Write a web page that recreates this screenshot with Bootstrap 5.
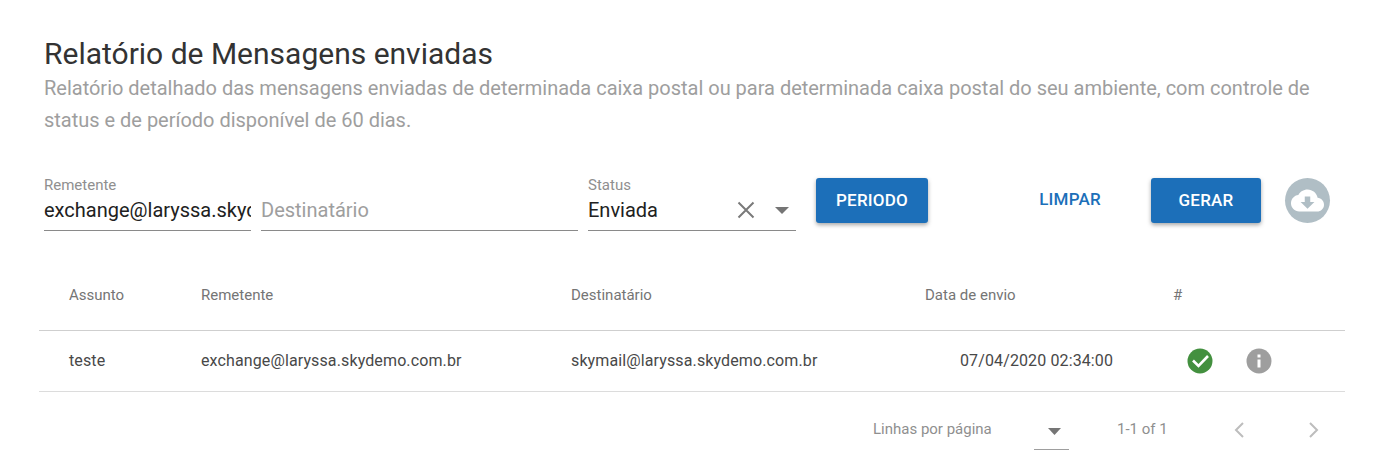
<!DOCTYPE html>
<html lang="en">

<head>
    <meta charset="UTF-8">
    <meta name="viewport" content="width=device-width, initial-scale=1.0">
    <title>Relatório de Mensagens enviadas</title>
    <link href="https://cdn.jsdelivr.net/npm/bootstrap@5.3.0/dist/css/bootstrap.min.css" rel="stylesheet">
    <style>
        body { font-family: Roboto, "Liberation Sans", sans-serif; background: #fff; color: #212121; overflow: hidden; }
        .report-page { padding: 36px 50px 0 39px; width: 1395px; }
        .report-head { padding-left: 5px; }
        .report-title { font-size: 30px; font-weight: 400; line-height: 36px; margin: 0; color: #333; }
        .report-sub { font-size: 20px; line-height: 32px; color: #9e9e9e; margin: 0; width: 1280px; letter-spacing: -.01px; }
        .filters { padding-left: 5px; margin-top: 42px; height: 67px; }
        .field { height: 53px; border-bottom: 1px solid #8a8a8a; flex: none; }
        .field-label { font-size: 15px; line-height: 17px; color: #8f8f8f; height: 18px; margin-top: -1px; }
        .field-value { font-size: 20px; line-height: 30px; color: #212121; white-space: nowrap; overflow: hidden; }
        .field-empty { color: #9e9e9e; padding-top: 17px; }
        .w-from { width: 207px; }
        .w-to { width: 317px; margin-left: 10px; }
        .w-status { width: 208px; margin-left: 10px; }
        .clear-icon { margin-right: 20px; }
        .drop-icon { margin-right: 7px; }
        .btn-report { background: #1c6fb9; color: #fff; font-size: 17px; font-weight: 500; letter-spacing: .2px; height: 45px; border: 0; border-radius: 3px; padding: 0; box-shadow: 0 2px 4px rgba(0,0,0,.35); flex: none; }
        .btn-report:hover { background: #1c6fb9; color: #fff; }
        .btn-periodo { width: 112px; margin-left: 20px; }
        .btn-gerar { width: 110px; margin-left: 26px; }
        .btn-limpar { width: 110px; margin-left: 87px; height: 45px; line-height: 43px; text-align: center; color: #1c6fb9; font-size: 17px; font-weight: 500; letter-spacing: .2px; }
        .cloud-btn { width: 45px; height: 45px; border-radius: 50%; background: #b0bec5; margin-left: 24px; flex: none; }
        .report-table { width: 1306px; margin: 14px 0 0; table-layout: fixed; }
        .col-subject { width: 162px; }
        .col-from { width: 370px; }
        .col-to { width: 354px; }
        .col-date { width: 248px; }
        .col-status { width: 59px; }
        .col-info { width: 113px; }
        .report-table th { font-size: 15px; font-weight: 400; color: #757575; height: 71px; border-bottom: 1px solid #cfcfcf; padding: 2px 0 0; vertical-align: middle; }
        .report-table td { font-size: 16px; color: #484848; letter-spacing: .12px; height: 61px; border-bottom: 1px solid #dcdcdc; padding: 0; vertical-align: middle; }
        .cell-first { padding-left: 30px !important; }
        .cell-date { padding-left: 35px !important; }
        .row-icon { display: block; margin-left: 14px; }
        .pager { height: 74px; width: 1306px; font-size: 15px; color: #8f8f8f; padding-top: 2px; }
        .pager-label { margin-left: 834px; width: 161px; }
        .pager-select { width: 35px; height: 37px; border-bottom: 1px solid #9e9e9e; flex: none; margin-top: 4px; }
        .pager-arrow { margin-left: 6px; }
        .pager-count { margin-left: 48px; width: 116px; }
        .pager-next { margin-left: 63px; }
    </style>
</head>

<body>
    <div class="report-page">
        <div class="report-head">
            <h1 class="report-title">Relatório de Mensagens enviadas</h1>
            <p class="report-sub">Relatório detalhado das mensagens enviadas de determinada caixa postal ou para determinada caixa postal do seu ambiente, com controle de status e de período disponível de 60 dias.</p>
        </div>

        <!-- filtros -->
        <div class="filters d-flex align-items-start">
            <div class="field w-from">
                <div class="field-label">Remetente</div>
                <div class="field-value">exchange@laryssa.skydemo.com.br</div>
            </div>
            <div class="field w-to">
                <div class="field-value field-empty">Destinatário</div>
            </div>
            <div class="field w-status">
                <div class="field-label">Status</div>
                <div class="d-flex align-items-center">
                    <div class="field-value flex-grow-1">Enviada</div>
                    <svg width="18" height="18" viewBox="0 0 18 18" class="clear-icon"><path d="M1.500 1.500l15 15M16.500 1.500l-15 15" stroke="#7a7a7a" stroke-width="2" fill="none"/></svg>
                    <svg width="14" height="7" viewBox="0 0 14 7" class="drop-icon"><path d="M0 0h14L7 7z" fill="#757575"/></svg>
                </div>
            </div>
            <button type="button" class="btn btn-report btn-periodo">PERIODO</button>
            <div class="btn-limpar">LIMPAR</div>
            <button type="button" class="btn btn-report btn-gerar">GERAR</button>
            <div class="cloud-btn d-flex align-items-center justify-content-center">
                <svg width="33" height="33" viewBox="0 0 24 24"><path d="M19.350 10.040C18.670 6.590 15.640 4 12 4 9.110 4 6.600 5.640 5.350 8.040 2.340 8.360 0 10.910 0 14c0 3.310 2.690 6 6 6h13c2.760 0 5-2.240 5-5 0-2.640-2.050-4.780-4.650-4.960zM17 13l-5 5-5-5h3V9h4v4h3z" fill="#fff"/></svg>
            </div>
        </div>

        <!-- tabela de mensagens -->
        <table class="report-table">
            <colgroup>
                <col class="col-subject">
                <col class="col-from">
                <col class="col-to">
                <col class="col-date">
                <col class="col-status">
                <col class="col-info">
            </colgroup>
            <thead>
                <tr>
                    <th class="cell-first">Assunto</th>
                    <th>Remetente</th>
                    <th>Destinatário</th>
                    <th>Data de envio</th>
                    <th>#</th>
                    <th></th>
                </tr>
            </thead>
            <tbody>
                <tr>
                    <td class="cell-first">teste</td>
                    <td>exchange@laryssa.skydemo.com.br</td>
                    <td>skymail@laryssa.skydemo.com.br</td>
                    <td class="cell-date">07/04/2020 02:34:00</td>
                    <td>
                        <svg width="26" height="26" viewBox="0 0 26 26" class="row-icon"><circle cx="13" cy="13" r="12.500" fill="#43903f"/><path d="M6 12.500l5.500 5.500 9.500-10" stroke="#fff" stroke-width="2.600" fill="none"/></svg>
                    </td>
                    <td>
                        <svg width="26" height="26" viewBox="0 0 26 26" class="row-icon"><circle cx="13" cy="13" r="12.500" fill="#9e9e9e"/><rect x="11.500" y="11.500" width="3" height="8" fill="#fff"/><rect x="11.500" y="6.500" width="3" height="3" fill="#fff"/></svg>
                    </td>
                </tr>
            </tbody>
        </table>

        <div class="pager d-flex align-items-center">
            <div class="pager-label">Linhas por página</div>
            <div class="pager-select d-flex align-items-center justify-content-center">
                <svg width="13" height="7" viewBox="0 0 13 7" class="pager-arrow"><path d="M0 0h13L6.500 7z" fill="#757575"/></svg>
            </div>
            <div class="pager-count">1-1 of 1</div>
            <svg width="12" height="18" viewBox="0 0 12 18"><path d="M10 2L3 9l7 7" stroke="#bdbdbd" stroke-width="2" fill="none"/></svg>
            <svg width="12" height="18" viewBox="0 0 12 18" class="pager-next"><path d="M2 2l7 7-7 7" stroke="#bdbdbd" stroke-width="2" fill="none"/></svg>
        </div>
    </div>
</body>

</html>
